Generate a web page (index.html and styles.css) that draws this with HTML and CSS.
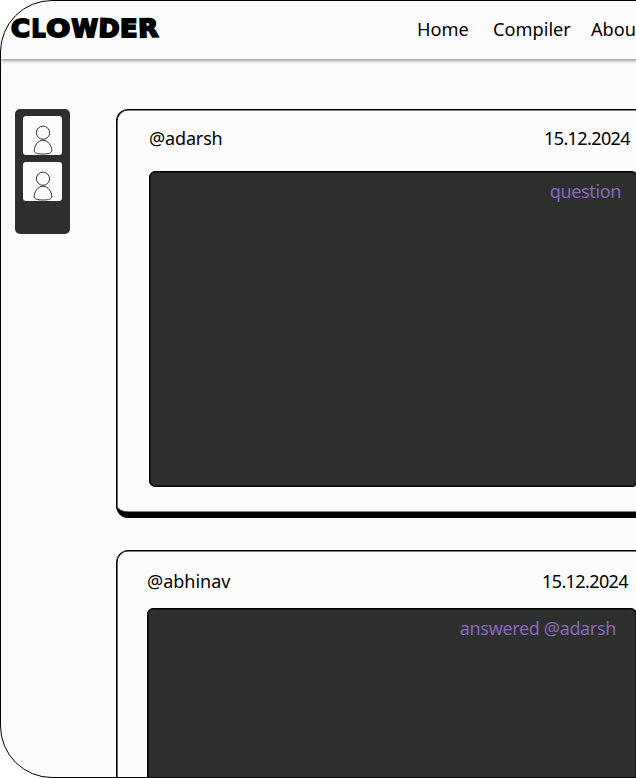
FILE: index.html
```html
<!DOCTYPE html>
<html lang="en">
<head>
<meta charset="utf-8">
<title>Clowder</title>
<link rel="stylesheet" href="styles.css">
</head>
<body>
<div class="app">
  <header class="header">
    <svg class="logo" width="150" height="26" viewBox="0 0 150 26" role="img" aria-label="Clowder">
      <text x="1" y="21.8" textLength="19" lengthAdjust="spacingAndGlyphs">C</text>
      <text x="21.5" y="22" textLength="14" lengthAdjust="spacingAndGlyphs">L</text>
      <text x="36.2" y="21.5" textLength="24" lengthAdjust="spacingAndGlyphs">O</text>
      <text x="61.5" y="22" textLength="26.5" lengthAdjust="spacingAndGlyphs">W</text>
      <text x="88.5" y="22" textLength="21" lengthAdjust="spacingAndGlyphs" transform="rotate(2 99 13)">D</text>
      <text x="110" y="22" textLength="17.5" lengthAdjust="spacingAndGlyphs">E</text>
      <text x="128.2" y="22" textLength="20" lengthAdjust="spacingAndGlyphs" transform="rotate(-2 138 13)">R</text>
    </svg>
    <nav class="nav">
      <a class="nav-home">Home</a>
      <a class="nav-compiler">Compiler</a>
      <a class="nav-about">About</a>
    </nav>
  </header>
  <main class="content">
    <aside class="members">
      <div class="avatar">
        <svg width="39" height="39" viewBox="0 0 39 39"><circle cx="20" cy="16.7" r="6.6"/><path d="M20 24.2C14.8 24.2 11.4 30 11.2 34.3C11 37.1 14 38 20 38S29 37.1 28.8 34.3C28.6 30 25.2 24.2 20 24.2Z"/></svg>
      </div>
      <div class="avatar">
        <svg width="39" height="39" viewBox="0 0 39 39"><circle cx="20" cy="16.7" r="6.6"/><path d="M20 24.2C14.8 24.2 11.4 30 11.2 34.3C11 37.1 14 38 20 38S29 37.1 28.8 34.3C28.6 30 25.2 24.2 20 24.2Z"/></svg>
      </div>
    </aside>
    <section class="feed">
      <article class="card question-card">
        <div class="meta"><span class="user">@adarsh</span><time class="date">15.12.2024</time></div>
        <div class="panel"><span class="tag">question</span></div>
      </article>
      <article class="card answer-card">
        <div class="meta"><span class="user">@abhinav</span><time class="date">15.12.2024</time></div>
        <div class="panel"><span class="tag">answered @adarsh</span></div>
      </article>
    </section>
  </main>
</div>
</body>
</html>
```
FILE: styles.css
```css
* { box-sizing: border-box; }

body {
  margin: 0;
  overflow: hidden;
  background: #fff;
  color: #000;
  font-family: "Noto Sans", sans-serif;
}

.app {
  width: 700px;
  height: 778px;
  overflow: hidden;
  border: 1px solid #000;
  border-radius: 52px;
  background: #fcfcfc;
}

.header {
  display: flex;
  height: 58px;
  padding-left: 9px;
  box-shadow: 0 2px 3px rgba(0, 0, 0, .36);
}

.logo {
  flex: none;
  margin-top: 14px;
  overflow: visible;
  font: bold 25px "DejaVu Sans", sans-serif;
  stroke: #000;
  stroke-width: 2px;
  stroke-linejoin: miter;
}

.nav {
  display: flex;
  flex: none;
  margin-left: 257px;
  padding-top: 15px;
  font-size: 18.2px;
  line-height: 26px;
  white-space: nowrap;
}

.nav-home { width: 76px; }
.nav-compiler { width: 98px; }

.content {
  display: flex;
  align-items: flex-start;
  padding: 49px 0 0 14px;
}

.members {
  display: flex;
  flex: none;
  flex-direction: column;
  gap: 7px;
  width: 55px;
  height: 125.5px;
  margin-top: .5px;
  padding: 7.5px 8px;
  border-radius: 5px;
  background: #2d2f2e;
}

.avatar {
  width: 39px;
  height: 39px;
  border-radius: 3px;
  background: #fcfcfc;
}

.avatar svg {
  display: block;
  fill: none;
  stroke: #333;
  stroke-width: 1;
}

.feed {
  display: flex;
  flex: none;
  flex-direction: column;
  gap: 32px;
  margin-left: 46px;
  padding-top: 1px;
}

.card {
  width: 560px;
  border: 1px solid #000;
  border-radius: 12px;
  background: #fcfcfc;
  box-shadow: inset 0 0 0 .6px #000;
}

.question-card {
  height: 409px;
  padding: 15px 0 0 32px;
  border-bottom-width: 6px;
}

.answer-card {
  height: 430px;
  padding: 17px 0 0 30px;
}

.meta {
  display: flex;
  justify-content: space-between;
  width: 481px;
  height: 46px;
  font-size: 18px;
  line-height: 26px;
}

.user { letter-spacing: -.15px; }
.date { letter-spacing: -.6px; }
.answer-card .user { letter-spacing: 0; }

.answer-card .meta { height: 40px; }

.panel {
  width: 489px;
  height: 316px;
  padding: 6px 16px;
  border: 1px solid #000;
  border-radius: 6px;
  background: #2d2f2e;
  box-shadow: inset 0 0 0 .6px #000;
  color: #8967bd;
  font-size: 18px;
  line-height: 26px;
  text-align: right;
  letter-spacing: -.35px;
}

.answer-card .panel {
  width: 490px;
  padding-right: 20px;
}
```
